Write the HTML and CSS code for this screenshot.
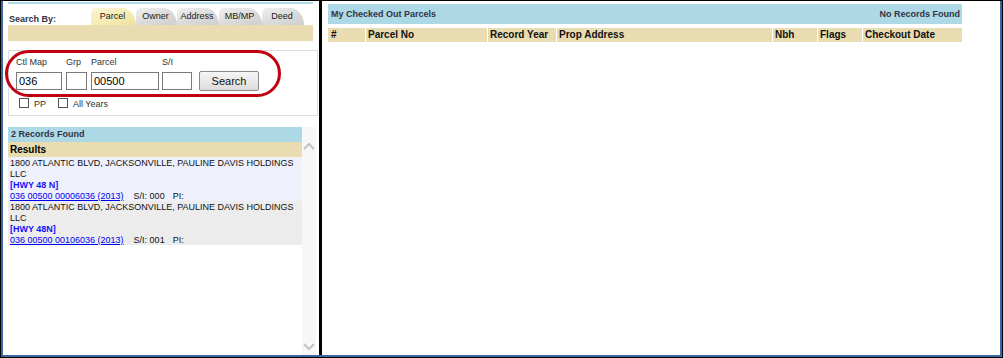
FILE: index.html
```html
<!DOCTYPE html>
<html>
<head>
<meta charset="utf-8">
<link rel="stylesheet" href="styles.css">
</head>
<body>
<div class="frame">
  <div class="inner">
    <div class="left">
      <div class="topline"></div>
      <div class="searchby">
        <div class="sb-label">Search By:</div>
        <div class="tabs">
          <div class="tab active t1">Parcel</div>
          <div class="tab t2">Owner</div>
          <div class="tab t3">Address</div>
          <div class="tab t4">MB/MP</div>
          <div class="tab t5">Deed</div>
        </div>
      </div>
      <div class="tanband"></div>
      <div class="searchpanel">
        <div class="fields">
          <div class="field f-ctl"><div class="flabel">Ctl Map</div><div class="input">036</div></div>
          <div class="field f-grp"><div class="flabel">Grp</div><div class="input"></div></div>
          <div class="field f-par"><div class="flabel">Parcel</div><div class="input">00500</div></div>
          <div class="field f-si"><div class="flabel">S/I</div><div class="input"></div></div>
          <div class="btn">Search</div>
        </div>
        <div class="checks">
          <span class="cb"></span><span class="cblabel">PP</span>
          <span class="cb cb2"></span><span class="cblabel">All Years</span>
        </div>
        <div class="highlight"></div>
      </div>
      <div class="results">
        <div class="list">
          <div class="found">2 Records Found</div>
          <div class="res-head">Results</div>
          <div class="rec rec-a">
            <div>1800 ATLANTIC BLVD, JACKSONVILLE, PAULINE DAVIS HOLDINGS LLC</div>
            <div class="hwy">[HWY 48 N]</div>
            <div><a class="plink" href="#">036 00500 00006036 (2013)</a><span class="si">S/I: 000</span><span class="pi">PI:</span></div>
          </div>
          <div class="rec rec-b">
            <div>1800 ATLANTIC BLVD, JACKSONVILLE, PAULINE DAVIS HOLDINGS LLC</div>
            <div class="hwy">[HWY 48N]</div>
            <div><a class="plink" href="#">036 00500 00106036 (2013)</a><span class="si">S/I: 001</span><span class="pi">PI:</span></div>
          </div>
        </div>
        <div class="scrollbar">
          <svg class="chev" width="12" height="8" viewBox="0 0 12 8"><polyline points="1,7 6,2 11,7" fill="none" stroke="#c3c3c3" stroke-width="2"/></svg>
          <svg class="chev" width="12" height="8" viewBox="0 0 12 8"><polyline points="1,1 6,6 11,1" fill="none" stroke="#c3c3c3" stroke-width="2"/></svg>
        </div>
      </div>
    </div>
    <div class="divider"></div>
    <div class="right">
      <div class="rhead"><span>My Checked Out Parcels</span><span>No Records Found</span></div>
      <div class="cols">
        <div class="col c1">#</div>
        <div class="col c2">Parcel No</div>
        <div class="col c3">Record Year</div>
        <div class="col c4">Prop Address</div>
        <div class="col c5">Nbh</div>
        <div class="col c6">Flags</div>
        <div class="col c7">Checkout Date</div>
      </div>
    </div>
  </div>
</div>
</body>
</html>
```
FILE: styles.css
```css
* { box-sizing: border-box; }
html, body { margin: 0; padding: 0; background: #fff; }
body { font-family: "Liberation Sans", Arial, sans-serif; font-size: 9px; color: #000; }

.frame { width: 1003px; height: 358px; border: 1px solid #000; }
.inner { height: 100%; display: flex; border-left: 2px solid #3a67a0; border-right: 2px solid #3a67a0; border-bottom: 2px solid #3a67a0; }

.left { width: 316px; flex: none; padding: 1px 0 0 5px; display: flex; flex-direction: column; }
.divider { width: 3px; flex: none; background: #000; }
.right { flex: 1; padding: 3px 0 0 6px; }

.topline { width: 305px; height: 2px; background: #add8e6; }
.searchby { width: 305px; height: 21px; display: flex; align-items: flex-end; }
.sb-label { width: 83px; font-size: 9px; font-weight: bold; color: #333344; padding-left: 1px; line-height: 12px; padding-bottom: 0; }
.tabs { display: flex; height: 17px; }
.tab { height: 17px; font-size: 9px; line-height: 17px; color: #222; text-align: center; padding-right: 2px;
  border-radius: 5px 14px 0 0 / 5px 17px 0 0;
  background: linear-gradient(160deg, #f0f0f0 0%, #dadada 55%, #cfcfcf 100%); }
.tab.active { background: linear-gradient(160deg, #fbf6d6 0%, #f5eab0 60%, #f0e29c 100%); }
.t1 { width: 45px; }
.t2 { width: 41px; }
.t3 { width: 42px; }
.t4 { width: 43px; }
.t5 { width: 42px; }
.tanband { width: 305px; height: 16px; background: #e8dcb0; }

.searchpanel { position: relative; margin-top: 9px; width: 310px; height: 66px; border: 1px solid #dddddd; padding: 5px 0 0 7px; }
.fields { display: flex; align-items: flex-end; }
.field { display: flex; flex-direction: column; }
.flabel { font-size: 9px; line-height: 12px; color: #333; height: 12px; margin-bottom: 4px; }
.input { height: 18px; border: 1px solid #7a7a7a; font-size: 11px; line-height: 16px; padding-left: 2px; color: #000; background: #fff; }
.f-ctl .input { width: 46px; }
.f-grp { margin-left: 4px; }
.f-grp .input { width: 21px; }
.f-par { margin-left: 4px; }
.f-par .input { width: 68px; }
.f-si { margin-left: 3px; }
.f-si .input { width: 30px; }
.btn { margin-left: 7px; margin-bottom: -1px; width: 60px; height: 20px; border: 1px solid #8a8a8a; border-radius: 2px;
  background: linear-gradient(#f6f6f6, #dcdcdc); font-size: 11px; line-height: 18px; text-align: center; color: #111; }
.checks { display: flex; align-items: center; margin-top: 7px; padding-left: 3px; height: 11px; }
.cb { width: 10px; height: 10px; border: 1px solid #555; background: #fff; flex: none; }
.cb2 { margin-left: 12px; }
.cblabel { font-size: 9px; color: #333; margin-left: 5px; line-height: 11px; padding-top: 3px; }
.highlight { position: absolute; left: -4px; top: -1px; width: 276px; height: 47px; border: 3px solid #c00010; border-radius: 24px; pointer-events: none; }

.results { margin-top: 11px; flex: 1; display: flex; width: 308px; }
.list { width: 294px; flex: none; }
.scrollbar { width: 14px; flex: none; background: #f7f7f7; display: flex; flex-direction: column; justify-content: space-between; align-items: center; padding: 15px 0 4px; }
.chev { display: block; }
.found { height: 15px; background: #add8e6; font-size: 9px; font-weight: bold; color: #333344; line-height: 15px; padding-left: 3px; }
.res-head { height: 15px; background: #e8dcb0; font-size: 10px; font-weight: bold; line-height: 15px; padding-left: 2px; color: #000; }
.rec { font-size: 9px; line-height: 11px; padding: 0 0 0 2px; color: #111; }
.rec-a { background: #eef0fb; height: 44px; padding-top: 1px; }
.rec-b { background: #ececec; height: 44px; padding-top: 1px; }
.hwy { font-weight: bold; color: #1414ff; }
.plink { color: #0000ee; text-decoration: underline; }
.si { margin-left: 10px; }
.pi { margin-left: 8px; }

.rhead { width: 634px; height: 20px; background: #add8e6; display: flex; justify-content: space-between; align-items: center; padding: 0 2px 0 3px; font-size: 9px; font-weight: bold; color: #333344; }
.cols { margin-top: 4px; display: flex; gap: 1px; width: 634px; }
.col { height: 14px; background: #e8dcb0; font-size: 10px; font-weight: bold; line-height: 14px; padding-left: 2px; color: #111; }
.c1 { width: 37px; padding-left: 3px; }
.c2 { width: 121px; }
.c3 { width: 68px; }
.c4 { width: 215px; }
.c5 { width: 44px; }
.c6 { width: 44px; }
.c7 { width: 99px; }
```
